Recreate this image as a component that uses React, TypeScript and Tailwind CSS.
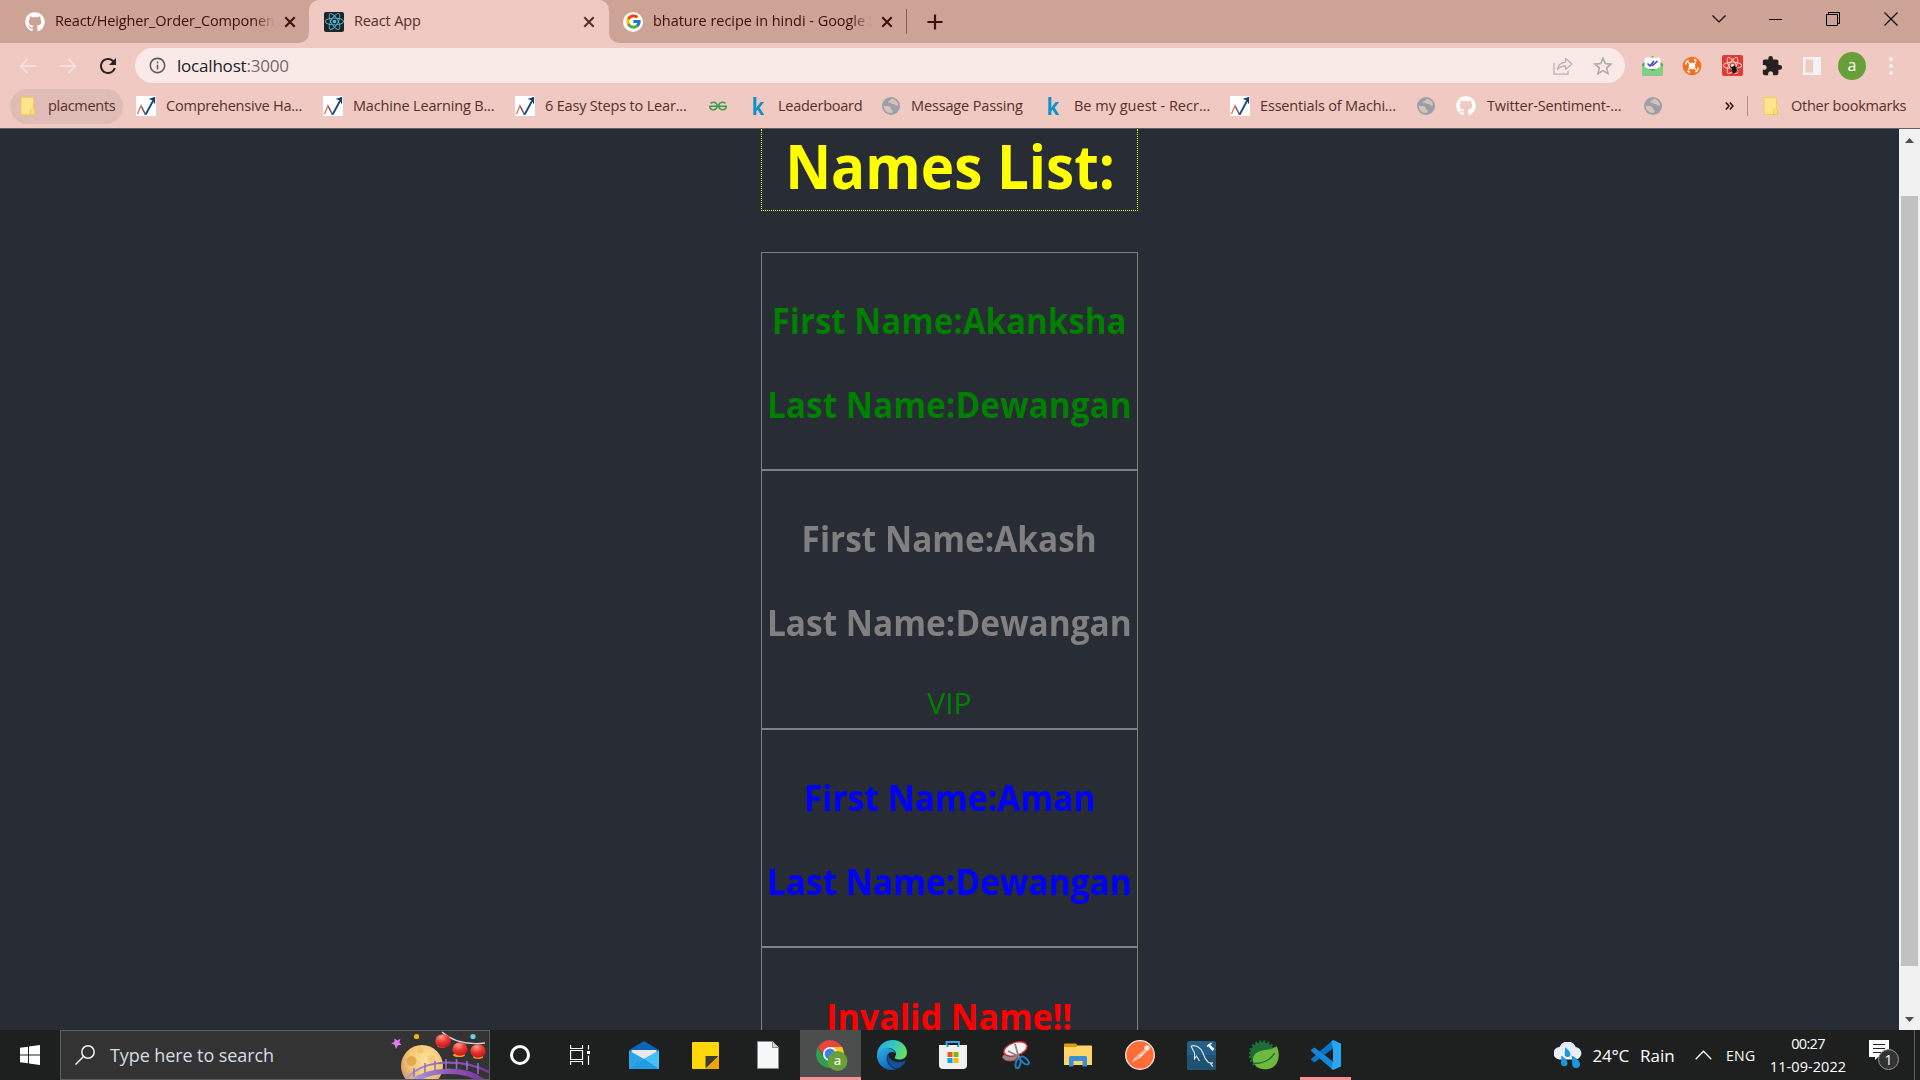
import type { ReactNode } from "react";
import { FaGithub, FaReact } from "react-icons/fa";
import { FcGoogle } from "react-icons/fc";
import { MdExtension, MdRefresh, MdInfoOutline } from "react-icons/md";
import { SiGeeksforgeeks } from "react-icons/si";

/* ---------- small shared icons ---------- */

function CloseX({ className }: { className: string }) {
  return (
    <svg viewBox="0 0 12 12" className={className}>
      <path d="M1.3 1.3 10.7 10.7M10.7 1.3 1.3 10.7" stroke="currentColor" strokeWidth="2" fill="none" />
    </svg>
  );
}

function GoogleIcon() {
  return (
    <span className="flex size-5 items-center justify-center rounded-full bg-white">
      <FcGoogle className="size-[17px]" />
    </span>
  );
}

function ReactIcon() {
  return (
    <span className="flex size-5 items-center justify-center rounded-[2px] bg-[#20232a]">
      <FaReact className="size-[19px] text-[#4fc3dc]" />
    </span>
  );
}

function FolderIcon() {
  return (
    <svg viewBox="0 0 15 18" className="h-[18px] w-[15px]">
      <path d="M1 .5H13.5V11.500L14.500 12.500V17.500H1Z" fill="#ffe48c" stroke="#f5ce4d" />
      <path d="M10.500 17.500V13l2-1.500 2 1.500v4.500Z" fill="#ffe07a" stroke="#f0c645" />
    </svg>
  );
}

function TrendIcon() {
  return (
    <svg viewBox="0 0 20 20" className="size-5">
      <rect width="20" height="20" fill="#fff" />
      <path d="M1.500 18 5 9.500 9.500 18.500" fill="none" stroke="#e0704a" strokeWidth="1.300" />
      <path d="M9.500 18.800 17.500 4" fill="none" stroke="#1d4a7c" strokeWidth="1.900" />
      <path d="M5.500 11 9.500 18.800" fill="none" stroke="#44608a" strokeWidth="1.200" />
      <path d="M12.500 3 19.200.8 19 8.500 16.600 4.300Z" fill="#173f70" />
    </svg>
  );
}

function GlobeIcon() {
  return (
    <svg viewBox="0 0 18 18" className="size-[18px]">
      <circle cx="9" cy="9" r="9" fill="#9aa0a6" />
      <path
        d="M1.800 8.500C4 9.500 6.500 8.300 8 9.800s.5 2.800 2.200 3.200c1 .3.600 1.800-.2 2.900C5 16.500 1.500 13 1.800 8.500ZM9.500 1.800c3.500.2 6.500 3 6.600 6.700-1 .8-2.600.2-3.200-.8-.8-1.300-2.600.1-3.500-1.200-.9-1.400-3 .1-3.300-1.200C6 4 8.700 4 9.500 1.800Z"
        fill="#e3c5bf"
        opacity=".85"
      />
    </svg>
  );
}

function KIcon() {
  return <span className="scale-x-[.88] text-[23px] leading-5 font-bold text-[#0b93c9]">k</span>;
}

/* ---------- browser chrome ---------- */

function TabBar() {
  return (
    <div className="flex h-[43px] bg-[#cda396] text-[14.500px] text-[#3d0d07]">
      <div className="flex h-full w-[299px] items-center pl-[25px]">
        <FaGithub className="size-5 shrink-0 text-white" />
        <div className="ml-[10px] w-[220px] overflow-hidden pb-px whitespace-nowrap tracking-[-0.140px] [mask-image:linear-gradient(to_right,#000_90%,transparent)]">
          React/Heigher_Order_Components
        </div>
        <CloseX className="ml-[9px] size-3 shrink-0" />
      </div>
      <div className="flex w-[10px] bg-[#efc9c2]">
        <div className="w-full rounded-br-[10px] bg-[#cda396]" />
      </div>
      <div className="bg-[#cda396]">
        <div className="flex h-full w-[300px] items-center rounded-t-[10px] bg-[#efc9c2] pl-[15px] text-[#53302b]">
          <ReactIcon />
          <div className="ml-[10px] w-[229px] pb-px tracking-[-0.130px]">React App</div>
          <CloseX className="size-3" />
        </div>
      </div>
      <div className="flex w-[10px] bg-[#efc9c2]">
        <div className="w-full rounded-bl-[10px] bg-[#cda396]" />
      </div>
      <div className="flex items-center pl-[4px]">
        <GoogleIcon />
        <div className="ml-[10px] w-[219px] overflow-hidden pb-px whitespace-nowrap tracking-[-0.040px] [mask-image:linear-gradient(to_right,#000_90%,transparent)]">
          bhature recipe in hindi - Google Search
        </div>
        <CloseX className="ml-[9px] size-3" />
        <div className="ml-[13px] h-[25px] w-px bg-[#8e5a50]" />
        <svg viewBox="0 0 16 16" className="ml-[20px] size-4">
          <path d="M8 .5V15.500M.5 8H15.500" stroke="currentColor" strokeWidth="2.200" />
        </svg>
      </div>
      <div className="mt-[11px] ml-auto flex h-4 items-center pr-[22px] text-black">
        <svg viewBox="0 0 14 8" className="mr-[43px] h-2 w-[14px]">
          <path d="M.5.500 7 7 13.500.500" fill="none" stroke="currentColor" strokeWidth="1.100" />
        </svg>
        <div className="mr-[44px] h-px w-[13px] bg-black" />
        <svg viewBox="0 0 14 14" className="mr-[44px] size-[14px]" fill="none" stroke="currentColor">
          <path d="M.5 2.500H11.500V13.500H.5ZM2.500 2.500V.5H13.500V11.500H11.500" />
        </svg>
        <svg viewBox="0 0 14 14" className="size-[14px]">
          <path d="M.5.500 13.500 13.500M13.500.500.5 13.500" stroke="currentColor" strokeWidth="1.100" />
        </svg>
      </div>
    </div>
  );
}

function NavArrow({ flip }: { flip?: boolean }) {
  return (
    <svg viewBox="0 0 17 16" className={flip ? "h-4 w-[17px] -scale-x-100" : "h-4 w-[17px]"}>
      <path d="M17 8H1.500M8.500 1 1.500 8l7 7" fill="none" stroke="#f5e1dd" strokeWidth="1.800" />
    </svg>
  );
}

function Toolbar() {
  return (
    <div className="flex h-[45px] items-center bg-[#efc9c2] pl-[19px]">
      <NavArrow />
      <span className="ml-[24px] flex">
        <NavArrow flip />
      </span>
      <MdRefresh className="ml-[19px] size-[24px] text-[#2b2424]" />
      <div className="ml-[15px] flex h-[35px] w-[1490px] items-center rounded-full bg-[#f9eae8] pl-[13px]">
        <MdInfoOutline className="size-[19px] text-[#5f5a5c]" />
        <div className="ml-[10px] text-[17px] tracking-[-0.200px] text-[#202124]">
          localhost<span className="text-[#70696b]">:3000</span>
        </div>
        <svg viewBox="0 0 20 18" className="mr-[20px] ml-auto h-[18px] w-5" fill="none" stroke="#b9b1b2" strokeWidth="1.300">
          <path d="M1 6V17.200H15V14" />
          <path d="M4.500 12.500C5 8 8 5.500 12.500 5.300V1.500L18.800 7 12.500 12.500V9C9 9 6.500 10 4.500 12.500Z" strokeLinejoin="round" />
        </svg>
        <svg viewBox="0 0 20 20" className="mr-[12px] size-5">
          <path
            d="M10 2.200 12.300 7.600 18.100 8.100 13.700 11.900 15 17.600 10 14.600 5 17.600 6.300 11.900 1.900 8.100 7.700 7.600Z"
            fill="none"
            stroke="#b0a8a9"
            strokeWidth="1.600"
          />
        </svg>
      </div>
      <svg viewBox="0 0 21 20" className="ml-[17px] h-5 w-[21px]">
        <path d="M0 8 10.500 0 21 8V18a1.500 1.500 0 0 1-1.500 1.500H1.500A1.500 1.500 0 0 1 0 18Z" fill="#4caf50" />
        <path d="M2.500 3.500a2 2 0 0 1 2-2h12a2 2 0 0 1 2 2V13h-16Z" fill="#fff" />
        <path d="M0 9.500 10.500 15 21 9.500V18a1.500 1.500 0 0 1-1.500 1.500H1.500A1.500 1.500 0 0 1 0 18Z" fill="#81cf83" />
        <path d="M5.500 7.500 8 10 12 5M10 10 15.500 5" fill="none" stroke="#4a3fc0" strokeWidth="1.600" />
      </svg>
      <svg viewBox="0 0 20 20" className="ml-[19px] size-5">
        <circle cx="10" cy="10" r="9.300" fill="#f4701f" />
        <circle cx="10" cy="10" r="3.300" fill="#fff" />
        <path
          d="M3.500 8.500C4 6.500 5 5 6.500 4.200M12 3.500 14.500 5M16.500 11.500C16 13.500 15 15 13.500 15.800M8 16.500 5.500 15M7.500 7.500 6.300 6.300M12.500 12.500 13.700 13.700M12.500 7.500 13.700 6.300M7.500 12.500 6.300 13.700"
          stroke="#fff"
          strokeWidth="1.600"
          fill="none"
        />
      </svg>
      <span className="relative ml-[20px] flex size-[21px] items-center justify-center rounded-[2px] bg-[#e23b35]">
        <FaReact className="size-[19px] text-[#fbe3e0]" />
        <svg viewBox="0 0 12 12" className="absolute top-[9px] left-[7px] size-[10px]">
          <ellipse cx="6" cy="6.500" rx="2.600" ry="4.500" fill="#1a1414" />
          <path d="M1.500 3 10.500 9M10.500 3 1.500 9M.5 6H11.500" stroke="#1a1414" />
        </svg>
      </span>
      <MdExtension className="ml-[18px] size-[22px] text-[#262020]" />
      <svg viewBox="0 0 18 18" className="ml-[20px] size-[18px]">
        <path d="M0 0H18V18H0ZM2.500 2.500V15.500H10V2.500Z" fill="#f3f3f6" fillRule="evenodd" />
      </svg>
      <div className="ml-[17px] flex size-[28px] items-center justify-center rounded-full bg-[#689f38] pb-[2px] text-[16px] leading-none text-white">
        a
      </div>
      <div className="ml-[23px] flex flex-col gap-[3px]">
        <i className="size-1 rounded-full bg-[#f6f0f1]" />
        <i className="size-1 rounded-full bg-[#f6f0f1]" />
        <i className="size-1 rounded-full bg-[#f6f0f1]" />
      </div>
    </div>
  );
}

type Bookmark = { icon: ReactNode; label?: string; box: string; iconBox: string; tracking?: string };

const bookmarks: Bookmark[] = [
  { icon: <TrendIcon />, label: "Comprehensive Ha...", box: "w-[187px]", iconBox: "w-[30px]", tracking: "tracking-[-0.210px]" },
  { icon: <TrendIcon />, label: "Machine Learning B...", box: "w-[192px]", iconBox: "w-[30px]", tracking: "tracking-[-0.170px]" },
  { icon: <TrendIcon />, label: "6 Easy Steps to Lear...", box: "w-[194px]", iconBox: "w-[30px]", tracking: "tracking-[-0.180px]" },
  { icon: <SiGeeksforgeeks className="size-[18px] text-[#3f9a55]" />, box: "w-[42px]", iconBox: "w-[20px]" },
  { icon: <KIcon />, label: "Leaderboard", box: "w-[131px]", iconBox: "w-[27px]", tracking: "tracking-[-0.260px]" },
  { icon: <GlobeIcon />, label: "Message Passing", box: "w-[164px]", iconBox: "w-[29px]", tracking: "tracking-[-0.140px]" },
  { icon: <KIcon />, label: "Be my guest - Recr...", box: "w-[184px]", iconBox: "w-[28px]", tracking: "tracking-[0px]" },
  { icon: <TrendIcon />, label: "Essentials of Machi...", box: "w-[187px]", iconBox: "w-[30px]", tracking: "tracking-[-0.170px]" },
  { icon: <GlobeIcon />, box: "w-[39px]", iconBox: "w-[20px]" },
  { icon: <FaGithub className="size-5 text-white" />, label: "Twitter-Sentiment-...", box: "w-[188px]", iconBox: "w-[31px]", tracking: "tracking-[-0.150px]" },
  { icon: <GlobeIcon />, box: "w-[81px]", iconBox: "w-[20px]" },
];

function BookmarksBar() {
  return (
    <div className="flex h-[41px] items-center bg-[#efc9c2] pb-[5px] pl-[10px] text-[14.500px] whitespace-nowrap text-[#56302b]">
      <div className="mr-[13px] flex h-[35px] w-[113px] items-center rounded-full bg-[#dfbcb6] pl-[10px]">
        <FolderIcon />
        <span className="ml-[13px] tracking-[-0.300px]">placments</span>
      </div>
      {bookmarks.map((b, i) => (
        <div key={i} className={`flex shrink-0 items-center ${b.box}`}>
          <span className={`flex shrink-0 ${b.iconBox}`}>{b.icon}</span>
          <span className={b.tracking}>{b.label}</span>
        </div>
      ))}
      <svg viewBox="0 0 9 8" className="h-2 w-[9px]">
        <path d="M.8.500 4 4 .8 7.500M4.800.500 8 4 4.800 7.500" fill="none" stroke="#2d1512" strokeWidth="1.600" />
      </svg>
      <div className="ml-[13px] h-[20px] w-px bg-[#b08d87]" />
      <span className="ml-[15px]">
        <FolderIcon />
      </span>
      <span className="ml-[13px] tracking-[-0.260px]">Other bookmarks</span>
    </div>
  );
}

/* ---------- page ---------- */

function Line({ text, squeeze }: { text: string; squeeze: string }) {
  return (
    <h3 className={`mt-[36px] h-[48px] shrink-0 pt-[2px] text-[36px] leading-[48px] font-bold whitespace-nowrap ${squeeze}`}>
      {text}
    </h3>
  );
}

function NameCard({ color, height, children }: { color: string; height: string; children: ReactNode }) {
  return (
    <section className={`flex shrink-0 flex-col items-center border border-[#808080] p-[6px] ${color} ${height}`}>
      {children}
    </section>
  );
}

function Page() {
  return (
    <main className="flex h-full flex-1 flex-col items-center overflow-hidden bg-[#282c34]">
      <div className="flex w-[377px] flex-col">
        <div className="mb-[41px] flex h-[82px] shrink-0 justify-center border-x border-b border-dotted border-[#ffff00] text-[#ffff00]">
          <h1 className="h-[74px] scale-x-[.942] text-[60px] leading-[74px] font-bold whitespace-nowrap">Names List:</h1>
        </div>
        <NameCard color="text-[#008000]" height="h-[218px]">
          <Line text="First Name:Akanksha" squeeze="scale-x-[.919]" />
          <Line text="Last Name:Dewangan" squeeze="scale-x-[.929]" />
        </NameCard>
        <NameCard color="text-[#808080]" height="h-[259px]">
          <Line text="First Name:Akash" squeeze="scale-x-[.927]" />
          <Line text="Last Name:Dewangan" squeeze="scale-x-[.929]" />
          <p className="mt-[36px] h-[41px] shrink-0 pt-px text-[30px] leading-[41px] text-[#008000]">VIP</p>
        </NameCard>
        <NameCard color="text-[#0000ff]" height="h-[218px]">
          <Line text="First Name:Aman" squeeze="scale-x-[.930]" />
          <Line text="Last Name:Dewangan" squeeze="scale-x-[.929]" />
        </NameCard>
        <NameCard color="text-[#ff0000]" height="h-[218px]">
          <Line text="Invalid Name!!" squeeze="translate-y-px scale-x-[.945]" />
        </NameCard>
      </div>
    </main>
  );
}

function Scrollbar() {
  return (
    <div className="flex h-full w-[21px] flex-col items-center justify-between bg-[#f1f1f1]">
      <svg viewBox="0 0 9 5" className="mt-[9px] h-[5px] w-[9px]">
        <path d="M4.500 0 9 5H0Z" fill="#505050" />
      </svg>
      <div className="mt-[53px] w-[17px] flex-1 bg-[#c1c1c1]" />
      <svg viewBox="0 0 9 5" className="mt-[51px] mb-[8px] h-[5px] w-[9px]">
        <path d="M4.500 5 9 0H0Z" fill="#505050" />
      </svg>
    </div>
  );
}

/* ---------- taskbar icons ---------- */

function FestivalArt() {
  return (
    <svg viewBox="0 0 98 48" className="h-[48px] w-[98px]">
      <defs>
        <radialGradient id="moon" cx=".6" cy=".35" r=".7">
          <stop offset="0" stopColor="#ffe3a0" />
          <stop offset=".6" stopColor="#f5c670" />
          <stop offset="1" stopColor="#cf956c" />
        </radialGradient>
        <radialGradient id="lantern" cx=".4" cy=".2" r=".8">
          <stop offset="0" stopColor="#ff9d8c" />
          <stop offset=".5" stopColor="#e93a32" />
          <stop offset="1" stopColor="#c3131d" />
        </radialGradient>
        <linearGradient id="bridge" x1="0" x2="1">
          <stop offset="0" stopColor="#a9a0e6" />
          <stop offset=".5" stopColor="#8e5bb8" />
          <stop offset="1" stopColor="#7b2f9c" />
        </linearGradient>
      </defs>
      <circle cx="31" cy="35" r="21" fill="url(#moon)" />
      <circle cx="20.500" cy="30" r="5" fill="#e0ab50" />
      <circle cx="29.500" cy="19.500" r="3" fill="#f0c373" />
      <circle cx="40.500" cy="28" r="4" fill="#f6cb7c" />
      <path d="M51 1C62 11 76 14 94 12" fill="none" stroke="#d9cdd6" strokeWidth="1.300" />
      <g>
        <path d="M45 12 47 16 53 17 58 13Z" fill="#f7a41d" />
        <ellipse cx="52" cy="10" rx="8" ry="6.800" fill="url(#lantern)" />
        <ellipse cx="68" cy="24" rx="6" ry="2" fill="#f7a41d" />
        <ellipse cx="69" cy="18" rx="7.700" ry="6.800" fill="url(#lantern)" />
        <ellipse cx="87" cy="26" rx="5" ry="1.800" fill="#f7a41d" />
        <ellipse cx="87" cy="20" rx="7.700" ry="6.800" fill="url(#lantern)" />
      </g>
      <circle cx="25.500" cy="5.500" r="2.600" fill="#ffb300" />
      <circle cx="82" cy="5.500" r="2.600" fill="#5cd6e8" />
      <path d="M3.500 7.500 6.200 9.400 9.500 7.800 8.300 11.500 10.500 14 7 14.300 5 18 3.700 14 .3 12.300 3.300 11Z" fill="#e27cf5" />
      <path d="M14 50C30 27 72 27 100 42" fill="none" stroke="url(#bridge)" strokeWidth="2.200" />
      <path d="M20 52C38 37 76 36 94 52" fill="none" stroke="url(#bridge)" strokeWidth="5.500" />
      <path d="M23 37V46M34 32V42M44 30V40M55 28V38M65.500 28V38M76 30V39M87 32V43" stroke="#8f70c4" strokeWidth="1.600" />
    </svg>
  );
}

function ChromeIcon() {
  return (
    <svg viewBox="0 0 32 32" className="size-8">
      <path d="M14 14 14 7H26.120A14 14 0 0 1 14 28L20.060 17.500Z" fill="#fcc934" />
      <path d="M14 14 20.060 17.500 14 28A14 14 0 0 1 1.880 7L7.940 17.500Z" fill="#2fa04e" />
      <path d="M1.880 7A14 14 0 0 1 26.120 7H14Q8.500 7.500 7.600 15Z" fill="#e8453c" />
      <circle cx="14" cy="14" r="7" fill="#fff" />
      <circle cx="14" cy="14" r="5.400" fill="#3a7ee8" />
      <circle cx="21.500" cy="21" r="10" fill="#689f38" />
      <text x="21.500" y="25.200" fontSize="13" fontWeight="600" textAnchor="middle" fill="#eef5e4">a</text>
    </svg>
  );
}

function EdgeIcon() {
  return (
    <svg viewBox="0 0 30 30" className="size-[30px]">
      <defs>
        <linearGradient id="edgeTop" x1="0" x2="1" y1=".3" y2=".6">
          <stop offset="0" stopColor="#2aa9e0" />
          <stop offset=".5" stopColor="#32c8c4" />
          <stop offset="1" stopColor="#6be15a" />
        </linearGradient>
        <linearGradient id="edgeLeft" x1="0" x2=".6" y1="0" y2="1">
          <stop offset="0" stopColor="#2fb4ea" />
          <stop offset="1" stopColor="#0c63b8" />
        </linearGradient>
      </defs>
      <path d="M0 14C1 5 8 0 15.500 0 24 0 30 6 30 12.500c0 4.500-3.500 7-7.500 7-3 0-5-1-4.800-2 .2-.8 1.300-1.500 1.300-3.500 0-3-3-6-8-6C5.500 8 1.500 11 0 14Z" fill="url(#edgeTop)" />
      <path d="M0 15C.5 10.500 4.500 8 9.500 8c4.500 0 8 2.500 9 5-2-1.500-6-1.500-7.800 1.500C8 19.500 11 27 19 29.300 9 32-.5 25 0 15Z" fill="url(#edgeLeft)" />
      <path d="M11 14C8.500 20 13 27.500 20 28.800 24 27.500 27 24.500 28.500 21.500c.3-.8-.3-1.200-1-.8C22 23.500 12 22 11 14Z" fill="#124f9c" />
    </svg>
  );
}

function StoreIcon() {
  return (
    <svg viewBox="0 0 30 30" className="size-[30px]">
      <path d="M8.500 7V2H21V7" fill="none" stroke="#2aa8ea" strokeWidth="2" />
      <path d="M1 5H29V25a4 4 0 0 1-4 4H5a4 4 0 0 1-4-4Z" fill="#f0f0f0" />
      <path d="M9.500 5V7M20 5V7" stroke="#2aa8ea" strokeWidth="2" />
      <path d="M9.500 12H14.500V17H9.500Z" fill="#f25022" />
      <path d="M15.500 12H20.500V17H15.500Z" fill="#7fba00" />
      <path d="M9.500 18H14.500V23H9.500Z" fill="#00a4ef" />
      <path d="M15.500 18H20.500V23H15.500Z" fill="#ffb900" />
    </svg>
  );
}

function SnipIcon() {
  return (
    <svg viewBox="0 0 30 30" className="size-[30px]">
      <ellipse cx="9" cy="17" rx="7.500" ry="4" fill="#8d8d8d" stroke="#c43a3a" strokeWidth=".8" />
      <ellipse cx="14.500" cy="9" rx="12" ry="6.500" transform="rotate(-18 14.500 9)" fill="#f4f4f6" stroke="#d8292f" strokeWidth="1.400" />
      <path d="M14 4 18 18M7 11 19 17" stroke="#888" strokeWidth="1.800" />
      <g fill="none" stroke="#1f7fc4" strokeWidth="1.900">
        <ellipse cx="17" cy="23.500" rx="2.300" ry="4.800" transform="rotate(12 17 23.500)" />
        <ellipse cx="23.500" cy="20.500" rx="2.500" ry="5.300" transform="rotate(-50 23.500 20.500)" />
      </g>
    </svg>
  );
}

function ExplorerIcon() {
  return (
    <svg viewBox="0 0 28 24" className="h-6 w-7">
      <path d="M0 1.500Q0 .5 1 .5H12L13.500 2.500 12 5H0Z" fill="#dd9a0c" />
      <path d="M0 4H12L13.500 2.500H27Q28 2.500 28 3.500V22H0Z" fill="#fdd667" />
      <path d="M5 23.500V14.500Q5 13 6.500 13H21.500Q23 13 23 14.500V23.500H18.500V18H9.500V23.500Z" fill="#3b8ed8" />
    </svg>
  );
}

function PostmanIcon() {
  return (
    <svg viewBox="0 0 30 30" className="size-[30px]">
      <circle cx="15" cy="15" r="14.300" fill="#ff6c37" stroke="#fbe9df" strokeWidth="1.300" />
      <circle cx="22" cy="8" r="2.700" fill="#ffe9df" />
      <path d="M6.500 22.500 12 15.500 19.500 9.500 21.500 11.500 15.500 17.500Z" fill="#ffe3d4" />
      <path d="M11 17 20 10.500M10.500 19.500 14 16" stroke="#ff6c37" strokeWidth=".8" />
    </svg>
  );
}

function MysqlIcon() {
  return (
    <svg viewBox="0 0 29 29" className="size-[29px]">
      <rect width="29" height="29" rx="2.500" fill="#255f88" />
      <rect y="14" width="29" height="15" rx="2.500" fill="#1e5273" />
      <path
        d="M4 5C9 3.500 14 7 16 12c1 3 1.500 6 5 9 1.500 1.200 4 1 5 .8-1 .5-2.500.8-2.500.8l2.500 3M4 5c1.500 2.500 2 4.500 3.500 7 .5 2-.5 4 0 6l2-3 3 5"
        fill="none"
        stroke="#dce8ef"
        strokeWidth="1.100"
      />
      <path d="M21.500 3.500 23.500 6 26.500 9" stroke="#fff" strokeWidth="2.600" />
      <path d="M20 5.500 24.500 2" stroke="#fff" strokeWidth="1.500" />
    </svg>
  );
}

function SpringIcon() {
  return (
    <svg viewBox="0 0 30 30" className="size-[30px]">
      <circle cx="13.500" cy="14.500" r="12.200" fill="#1d6d35" />
      <circle cx="13.500" cy="14.500" r="13" fill="none" stroke="#1d6d35" strokeWidth="2.600" strokeDasharray="2.200 1.900" />
      <path d="M27.500 6C22 12 10 7.500 5 15.500 3 19 4 23.500 6.500 25.500 10 30 20 31 25.500 26 30.500 21 31 13 27.500 6Z" fill="#6db83f" />
      <path d="M5 23.500C14 23.500 21 21 25.500 13" fill="none" stroke="#1d6d35" strokeWidth="1.400" />
    </svg>
  );
}

function VsCodeIcon() {
  return (
    <svg viewBox="0 0 30 30" className="size-[30px]">
      <path d="M22 0V8.500L3.500 22.500 0 20V19Z" fill="#0b74c4" />
      <path d="M22 30V21.500L3.500 7.500 0 10V11Z" fill="#1687d4" />
      <path d="M22 0 30 3.500V26.500L22 30 20.500 28.500 22 21.500V8.500L20.500 1.500Z" fill="#2aa5f2" />
    </svg>
  );
}

function MailIcon() {
  return (
    <svg viewBox="0 0 30 28" className="h-7 w-[30px]">
      <path d="M0 9 15 0 30 9V12H0Z" fill="#0a64b8" />
      <path d="M2.500 9H27.500V22H2.500Z" fill="#e9e9ec" />
      <path d="M0 9.500 15 18 30 9.500V28H0Z" fill="#2aa6e6" />
      <path d="M15 18 30 28V9.500Z" fill="#43c2f5" />
      <path d="M15 18 30 28H0Z" fill="#1e8fdc" opacity=".55" />
    </svg>
  );
}

function WeatherIcon() {
  return (
    <svg viewBox="0 0 28 26" className="h-[26px] w-7">
      <defs>
        <linearGradient id="cloud" x2="0" y2="1">
          <stop offset="0" stopColor="#dde5f7" />
          <stop offset="1" stopColor="#f1f4fb" />
        </linearGradient>
      </defs>
      <path d="M6 17.500A6 6 0 0 1 5.500 5 8.800 8.800 0 0 1 21.800 5 6.300 6.300 0 0 1 22 17.500Z" fill="url(#cloud)" />
      <g fill="#1d96e0">
        <path d="M11 5.500C14 7.500 16.500 10 16.500 12a2.900 2.900 0 0 1-5.800 0C10.700 10 11.200 8 11 5.500Z" />
        <path d="M7 13.500C10.500 15.500 13.500 18.500 13.500 21a3.200 3.200 0 0 1-6.400 0C7.100 18.500 7.500 16 7 13.500Z" />
        <path d="M17.500 13.500C22 15.500 26 19 26 22a3.900 3.900 0 0 1-7.800 0C18.200 19 18.200 16.500 17.500 13.500Z" />
      </g>
    </svg>
  );
}

/* ---------- taskbar ---------- */

function Taskbar() {
  return (
    <footer className="flex h-[50px] shrink-0 items-center bg-[#1e1f1f] text-white">
      <div className="flex w-[60px] justify-center">
        <svg viewBox="0 0 20 20" className="size-5" fill="#fff">
          <path d="M0 2.800 8 1.700V9.500H0ZM9 1.500 20 0V9.500H9ZM0 10.500H8V18.300L0 17.200ZM9 10.500H20V20L9 18.500Z" />
        </svg>
      </div>
      <div className="flex h-[50px] w-[430px] items-center border border-[#5e5e5e] bg-[#333333] pl-[14px]">
        <svg viewBox="0 0 20 20" className="size-5" fill="none" stroke="#f2f2f2" strokeWidth="1.500">
          <circle cx="13" cy="7" r="6.200" />
          <path d="M8.500 11.500.5 19.500" />
        </svg>
        <span className="ml-[15px] text-[18px] tracking-[-0.090px] text-[#d5dde4]">Type here to search</span>
        <span className="ml-auto">
          <FestivalArt />
        </span>
      </div>
      <div className="flex w-[60px] justify-center">
        <div className="size-5 rounded-full border-[3px] border-white" />
      </div>
      <div className="flex w-[60px] justify-center">
        <svg viewBox="0 0 20 20" className="size-5" fill="none" stroke="#fff" strokeWidth="1.200">
          <path d="M.6 0V3.500H12.500V0M.6 5.500H12.500V14.500H.6ZM.6 20V16.500H12.500V20M18.500 0V4.500M18.500 10.500V20" />
          <path d="M17 6H20V9H17Z" fill="#fff" stroke="none" />
        </svg>
      </div>
      <div className="ml-[19px]">
        <MailIcon />
      </div>
      <svg viewBox="0 0 27 27" className="ml-[33px] size-[27px]">
        <rect width="27" height="27" rx="1" fill="#ffd60a" />
        <path d="M13.500 14H26V14.500L13.500 26.500Z" fill="#3d3a33" />
        <path d="M13.500 27 27 14V26a1 1 0 0 1-1 1Z" fill="#f0a30a" />
      </svg>
      <svg viewBox="0 0 22 28" className="ml-[38px] h-7 w-[22px]">
        <path d="M.5.500H15.500L21.500 6.500V27.500H.5Z" fill="#f6f7f8" stroke="#8b8b8b" />
        <path d="M15.500.5V6.500H21.500" fill="#d4d4d4" stroke="#8b8b8b" />
      </svg>
      <div className="ml-[21px] flex h-full w-[61px] items-center justify-center border-b-[3px] border-[#ff9096] bg-[#4c4d4d] pt-[4px] pl-[2px]">
        <ChromeIcon />
      </div>
      <div className="ml-[16px]">
        <EdgeIcon />
      </div>
      <div className="ml-[31px]">
        <StoreIcon />
      </div>
      <div className="ml-[33px]">
        <SnipIcon />
      </div>
      <div className="ml-[33px]">
        <ExplorerIcon />
      </div>
      <div className="ml-[33px]">
        <PostmanIcon />
      </div>
      <div className="ml-[32px]">
        <MysqlIcon />
      </div>
      <div className="ml-[33px]">
        <SpringIcon />
      </div>
      <div className="ml-[21px] flex h-full w-[51px] items-center justify-center border-b-[3px] border-[#ff9096] pt-[3px]">
        <VsCodeIcon />
      </div>
      <div className="ml-auto flex h-full items-center pr-[5px]">
        <WeatherIcon />
        <span className="ml-[11px] pt-[2px] text-[17px] tracking-[-0.240px]">24°C</span>
        <span className="ml-[11px] w-[34px] pt-[2px] text-[17px]">Rain</span>
        <svg viewBox="0 0 17 10" className="ml-[21px] h-[10px] w-[17px]">
          <path d="M.7 9.300 8.500 1.200 16.300 9.300" fill="none" stroke="#fff" strokeWidth="1.300" />
        </svg>
        <span className="ml-[14px] w-[29px] text-[14px] tracking-[0.340px]">ENG</span>
        <div className="ml-[14px] flex w-[78px] flex-col items-center text-[14.500px] leading-[23px]">
          <span className="tracking-[-0.670px]">00:27</span>
          <span className="tracking-[0.070px]">11-09-2022</span>
        </div>
        <div className="relative ml-[22px] h-[30px] w-[30px]">
          <svg viewBox="0 0 20 20" className="size-5">
            <path d="M0 0H20V17H9L6 20V17H0Z" fill="#fff" />
            <path d="M4 4.500H16M4 8.500H16M4 12.500H12" stroke="#222" strokeWidth="1.200" />
          </svg>
          <div className="absolute top-[9px] left-[9px] flex size-[21px] items-center justify-center rounded-full border border-[#9a9a9a] bg-[#333] text-[14px] leading-none">
            1
          </div>
        </div>
        <div className="ml-[15px] h-full w-px bg-[#5c5c5c]" />
      </div>
    </footer>
  );
}

export default function App() {
  return (
    <div className='flex h-[1080px] w-[1920px] flex-col overflow-hidden font-["Open_Sans","Noto_Sans",sans-serif]'>
      <TabBar />
      <Toolbar />
      <BookmarksBar />
      <div className="-mt-px box-content flex h-[901px] shrink-0 border-t border-[#5d6068] bg-[#282c34]">
        <Page />
        <Scrollbar />
      </div>
      <Taskbar />
    </div>
  );
}
